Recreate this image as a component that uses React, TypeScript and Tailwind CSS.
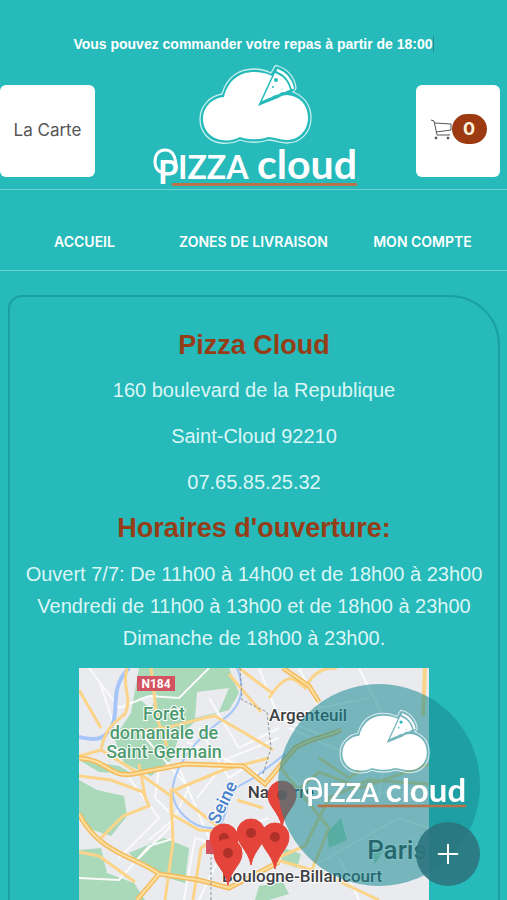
import React from 'react';
import { Plus } from 'lucide-react';

const navLinks = ['ACCUEIL', 'ZONES DE LIVRAISON', 'MON COMPTE'];

const address = ['160 boulevard de la Republique', 'Saint-Cloud 92210', '07.65.85.25.32'];

const hours = [
  'Ouvert 7/7: De 11h00 à 14h00 et de 18h00 à 23h00',
  'Vendredi de 11h00 à 13h00 et de 18h00 à 23h00',
  'Dimanche de 18h00 à 23h00.'
];

// tip of each marker on the map
const pins = [
  { x: 203, y: 159 },
  { x: 145, y: 202 },
  { x: 172, y: 197 },
  { x: 196, y: 201 },
  { x: 149, y: 217 }
];

const Logo: React.FC<{ className: string }> = ({ className }) => (
  <svg viewBox="0 0 204 122" className={`overflow-visible ${className}`} aria-label="Pizza Cloud">
    {/* Cloud */}
    <path
      d="M68 29 C73 12 85 4 100 4 C108 4 113 6 117 8 L121 1 Q122 0 124 1 C134 4 141 13 142 23 Q142 25 139 27 C151 32 157 41 157 53 C157 68 146 78 133 78 C126 78 120 75 114 75 C106 78 94 78 86 75 C80 78 73 79 67 78 C55 77 46 67 46 54 C46 41 56 31 68 29 Z"
      fill="none"
      stroke="white"
      strokeWidth="1.3"
      opacity="0.75"
    />
    <path
      d="M70 32 C74 15 86 7 100 7 C107 7 112 8 118 11 L104 41 L124 33 C127 31 130 30 133 30 C146 31 154 40 154 53 C154 66 144 75 133 75 C126 75 120 72 114 72 C106 75 94 75 86 72 C80 75 74 76 68 75 C57 74 49 65 49 54 C49 42 58 33 70 32 Z"
      fill="white"
    />
    {/* Slice */}
    <path d="M108 36 L121 8 C129 11 134 16 136 25 C133 25 132 28 129 27 C126 27 126 30 122 30 C119 30 118 33 115 33 C112 34 111 35 108 36 Z" fill="white" />
    <path d="M123 5 C131 8 137 15 139 24" fill="none" stroke="white" strokeWidth="2.6" />
    <circle cx="122" cy="15" r="2" fill="#26baba" />
    <circle cx="119" cy="22" r="1" fill="#26baba" />
    <circle cx="128" cy="24" r="0.6" fill="#26baba" />
    {/* Wordmark */}
    <g fill="white" fontFamily="Lato" fontWeight="700">
      <text x="4" y="119" fontSize="33">
        P
        <tspan x="24" y="114" fontSize="32">IZZA</tspan>
      </text>
      <text x="103" y="114" fontSize="41">cloud</text>
    </g>
    <path d="M8 107 C3 107 1 101 1 97 C1 89 5 85 11 85 C18 85 22 91 22 103" fill="none" stroke="white" strokeWidth="3" />
    <rect x="18" y="118" width="185" height="3" rx="1" fill="#ba7248" />
  </svg>
);

const Cart = () => (
  <svg viewBox="0 0 22 22" className="w-[22px] h-[22px]" fill="none" stroke="#555" strokeWidth="1">
    <path d="M1 2 L4 3 L7 17 H20 M5 5 L21 6 V12 L6 14" />
    <circle cx="6" cy="20" r="1" fill="#444" />
    <circle cx="18" cy="20" r="1" fill="#444" />
  </svg>
);

const CityMap = () => (
  <svg viewBox="0 0 350 232" className="w-full block" aria-label="Carte">
    <rect width="350" height="232" fill="#e9ebee" />
    {/* Forests */}
    <g fill="#a9d9b8">
      <path d="M60 0 H150 L160 25 L150 42 L120 50 L100 68 L92 92 L72 108 L45 95 L35 70 L52 45 Z" />
      <path d="M0 112 L18 122 L45 128 L48 148 L32 168 L8 160 L0 150 Z" />
      <path d="M0 182 L22 180 L28 205 L55 215 L66 232 H0 Z" />
      <path d="M50 185 L85 170 L110 180 L106 215 L82 208 L60 195 Z" />
      <path d="M205 180 L222 186 L218 200 L202 194 Z M290 176 L305 182 L296 196 Z" />
      <path d="M248 165 L262 150 L268 172 L250 180 Z M0 92 L40 98 L54 106 L20 104 Z" />
      <path d="M180 218 L204 214 L210 226 L190 232 H176 Z" />
    </g>
    <path d="M118 24 L150 20 L140 44 L116 50 Z M60 30 L78 26 L72 42 Z" fill="#e9ebee" />
    {/* Minor roads */}
    <g fill="none" stroke="#fafafa" strokeWidth="2">
      <path d="M10 0 L40 40 L70 28 L100 30 L130 0 M62 65 L110 120 L90 160 L60 190 M80 100 L76 130 L96 150 L70 172" />
      <path d="M120 60 L150 110 L180 90 M118 130 L150 90 L200 70 M100 100 L130 170 L190 150 M180 0 L200 50 L250 70 M220 0 L240 40 L290 30" />
      <path d="M0 210 L40 212 L70 178 L96 170 M200 100 L250 140 L320 120 M210 60 L300 100 L350 90 M230 200 L320 150 L350 160 M280 0 L310 60 L300 130" />
      <path d="M130 30 L160 80 L200 60 M50 110 L80 150 L40 190 M140 190 L120 232 M260 190 L280 232 M105 232 L116 170 L148 180 M20 12 L36 60 M108 74 L184 108" />
    </g>
    {/* Rivers */}
    <g fill="none" stroke="#a6c6fa" strokeWidth="4">
      <path d="M50 0 C26 24 46 50 26 67 C18 74 6 70 0 69" />
      <path d="M158 0 C168 24 160 42 140 54 C112 76 98 96 94 118 C90 138 112 162 136 160 C148 158 146 128 160 118 L178 108 L206 86" strokeWidth="2" />
    </g>
    {/* Main roads */}
    <g fill="none" stroke="#fbd489" strokeWidth="3">
      <path d="M48 0 C42 20 54 28 46 46 C36 54 26 60 22 82 L0 88" />
      <path d="M72 0 L78 50 L88 78 M0 22 L22 60 M22 82 L64 108 L92 128 L92 146 L120 162 L150 164" />
      <path d="M44 62 C80 66 110 52 136 48 L164 64 L194 82 M60 96 L66 128 M96 122 L144 102 L190 90 M92 122 L94 174 L86 232" />
      <path d="M0 108 L32 112 L64 124 L70 138 L44 148 L22 170 M114 232 L122 180 L150 160 M0 184 L20 188 L56 214" />
      <path d="M150 6 L182 44 M160 0 L194 26 M158 132 L184 140 M92 120 L110 136 L146 164" />
      <path d="M190 30 C210 0 216 12 226 20 C236 0 250 0 258 0 M240 90 L270 110 L312 80 M202 100 L250 160 L232 204" />
      <path d="M204 134 L240 104 L282 120 L350 96 M198 190 L226 178 L250 130 L290 112 L350 116 M198 192 L240 204 L300 232" />
    </g>
    <g fill="none" stroke="#f5ba5b" strokeWidth="5">
      <path d="M0 90 C30 92 30 110 54 106 L106 96 L164 98 L186 116 L216 80 C236 68 246 70 262 62" />
      <path d="M204 0 L230 18 L240 34 M0 146 C20 186 60 190 80 206 L120 212 L150 220 L200 194 M80 206 L58 232" />
    </g>
    <g fill="none" stroke="#fde0a0" strokeWidth="2">
      <path d="M0 90 C30 92 30 110 54 106 L106 96 L164 98 L186 116 L216 80 C236 68 246 70 262 62" />
      <path d="M204 0 L230 18 L240 34 M0 146 C20 186 60 190 80 206 L120 212 L150 220 L200 194 M80 206 L58 232" />
    </g>
    <path d="M346 0 L344 48" fill="none" stroke="#fbd489" strokeWidth="4" />
    <path d="M161 0 L163 32 L188 44 L192 80 L184 106 M132 232 V190 L142 150" fill="none" stroke="#909398" strokeWidth="1" strokeDasharray="3 2" />
    {/* Labels */}
    <rect x="58" y="8" width="38" height="15" fill="#d35460" />
    <rect x="127" y="172" width="24" height="14" fill="#d35460" />
    <g fontFamily="Roboto" fontWeight="500" stroke="white" strokeWidth="2" paintOrder="stroke" textAnchor="middle">
      <text x="77" y="20" fontSize="12" fontWeight="700" fill="white" stroke="none">N184</text>
      <g fill="#4b9b6e" fontSize="18">
        <text x="85" y="52">Forêt</text>
        <text x="85" y="71">domaniale de</text>
        <text x="85" y="90">Saint-Germain</text>
      </g>
      <text x="149" y="137" fontSize="18" fill="#4a82cc" transform="rotate(-64 149 137)">Seine</text>
      <g fill="#3c4043" fontSize="17">
        <text x="229" y="53">Argenteuil</text>
        <text x="202" y="130">Nanterre</text>
        <text x="223" y="214">Boulogne-Billancourt</text>
      </g>
      <text x="318" y="191" fontSize="26" fill="#3c4043">Paris</text>
    </g>
    {pins.map((pin) => (
      <g key={`${pin.x}-${pin.y}`} transform={`translate(${pin.x} ${pin.y})`}>
        <path d="M0 0 C-3 -16 -14 -20 -14 -32 A14 14 0 0 1 14 -32 C14 -20 3 -16 0 0 Z" fill="#e4443a" stroke="#e4443a" strokeWidth="1" />
        <circle cy="-32" r="5" fill="#b0302a" />
      </g>
    ))}
  </svg>
);

const App: React.FC = () => {
  return (
    <div className="bg-[#26baba] font-['Liberation_Sans',sans-serif] text-white">
      <header>
        <div className="flex justify-center pt-9">
          <p className="h-4 border-r border-[#1f8f92] text-[14px] leading-4 font-bold">
            Vous pouvez commander votre repas à partir de 18:00
          </p>
        </div>
        <div className="flex justify-between items-start mt-3 h-[126px] pr-[7px] border-b border-[#6fd0d0]">
          <button className="mt-[21px] w-[95px] h-[92px] rounded-md bg-white text-[#555] font-[Inter] text-[17px]">
            La Carte
          </button>
          <a href="#" className="mt-px">
            <Logo className="w-[204px]" />
          </a>
          <button className="mt-[21px] w-[84px] h-[92px] rounded-md bg-white flex items-center justify-center pb-1">
            <Cart />
            <span className="w-[35px] h-[30px] rounded-2xl bg-[#9e3a12] text-[#fff3dc] font-[Inter] font-bold text-lg leading-[30px]">
              0
            </span>
          </button>
        </div>
        <nav className="grid grid-cols-3 h-[81px] pt-[22px] items-center text-center border-b border-[#6fd0d0]">
          {navLinks.map((link) => (
            <a key={link} href="#" className="font-[Inter] font-semibold text-[14px]">
              {link}
            </a>
          ))}
        </nav>
      </header>

      <main className="mt-6 ml-2 mr-[7px] pt-[30px] border-2 border-b-0 border-[#1a9fa2] rounded-tl-[14px] rounded-tr-[50px] text-center">
        <h1 className="text-[27px] leading-9 font-bold text-[#953d17]">Pizza Cloud</h1>
        <div className="mt-3 flex flex-col gap-4 text-[20px] leading-[30px] text-[#dcf6f6]">
          {address.map((line) => (
            <p key={line}>{line}</p>
          ))}
        </div>
        <h2 className="mt-[13px] text-[27px] leading-9 font-bold text-[#953d17]">Horaires d'ouverture:</h2>
        <div className="mt-3 text-[20px] leading-8 text-[#dcf6f6]">
          {hours.map((line) => (
            <p key={line}>{line}</p>
          ))}
        </div>
        <div className="mt-[14px] mx-auto w-[350px]">
          <CityMap />
        </div>
      </main>

      {/* Floating menu */}
      <div className="fixed right-[27px] bottom-[14px] w-[202px] h-[202px]">
        <div className="w-full h-full rounded-full bg-[#168891]/55 pt-[26px] pl-[25px]">
          <Logo className="w-[164px] max-w-none" />
        </div>
        <button
          aria-label="Ouvrir le menu"
          className="absolute right-0 bottom-0 w-16 h-16 rounded-full bg-[#2c757e]/90 flex items-center justify-center"
        >
          <Plus size={32} strokeWidth={1.5} />
        </button>
      </div>
    </div>
  );
};

export default App;
